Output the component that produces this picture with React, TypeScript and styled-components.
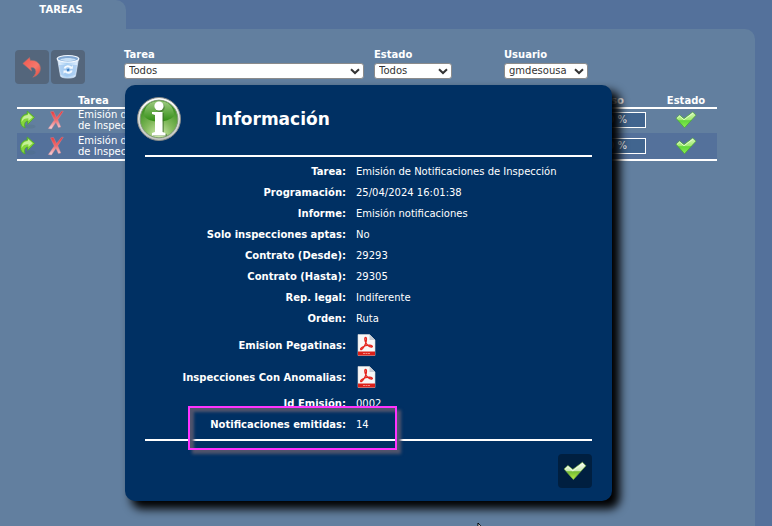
import React from "react";
import styled, { createGlobalStyle } from "styled-components";

const GlobalStyle = createGlobalStyle`
  * { box-sizing: border-box; }
  html, body, #root { height: 100%; }
  body {
    margin: 0;
    overflow: hidden;
    background: #54719b;
    color: #fff;
    font: 10px/11px Verdana, "DejaVu Sans", sans-serif;
  }
  button { border: 0; padding: 0; background: none; cursor: pointer; }
  svg { display: block; }
`;

const Page = styled.div`
  position: relative;
  min-height: 100%;
  display: flex;
  flex-direction: column;
  padding-right: 17px;
  overflow: hidden;
`;

const Tab = styled.a`
  width: 126px;
  height: 29px;
  padding: 4px 4px 0 0;
  border-radius: 0 10px 0 0;
  background: #627f9f;
  color: #fff;
  font-weight: bold;
  text-align: center;
  text-decoration: none;
`;

const Panel = styled.main`
  flex: 1;
  padding: 20px 38px 0 15px;
  border-radius: 0 10px 0 0;
  background: #627f9f;
`;

const Toolbar = styled.div`
  display: flex;
  gap: 2px;
  height: 46px;
`;

const ToolButton = styled.button<{ $dark?: boolean }>`
  display: grid;
  place-items: center;
  width: 34px;
  height: 34px;
  margin-top: ${(p) => (p.$dark ? 0 : 1)}px;
  border-radius: 4px;
  background: ${(p) => (p.$dark ? "#001f40" : "#54667c")};
`;

const Filters = styled.div`
  display: flex;
  margin-left: 37px;
`;

const Field = styled.label<{ $width: number }>`
  display: flex;
  flex-direction: column;
  gap: 3px;
  width: ${(p) => p.$width}px;
  font-weight: bold;
`;

const SelectBox = styled.span<{ $width: number }>`
  display: grid;
  align-items: center;
  width: ${(p) => p.$width}px;
  > * { grid-area: 1 / 1; }
  > svg { justify-self: end; margin-right: 4px; pointer-events: none; }
`;

const Select = styled.select`
  appearance: none;
  width: 100%;
  height: 16px;
  padding: 0 4px;
  border: 1px solid #8b8b8b;
  border-radius: 3px;
  background: #fff;
  color: #333;
  font: 10px/14px Verdana, "DejaVu Sans", sans-serif;
`;

const TaskTableFrame = styled.div`
  padding-left: 2px;
`;

const TaskTable = styled.table`
  width: 100%;
  table-layout: fixed;
  border-collapse: separate;
  border-spacing: 0;
  border-bottom: 2px solid #fff;
  th { height: 12px; padding: 0 0 1px; text-align: left; }
  th:last-child { text-align: center; }
  td { height: 26px; padding: 0; }
  tbody tr:first-child td { background: linear-gradient(#fff 2px, transparent 2px); }
  td:last-child svg { margin: 0 auto; }
`;

const Row = styled.tr<{ $alternate?: boolean }>`
  background: ${(p) => (p.$alternate ? "#54719b" : "transparent")};
`;

const IconButton = styled.button`
  display: block;
  margin-left: 2px;
`;

const Progress = styled.div`
  width: 70px;
  height: 16px;
  margin-left: 3px;
  border: 1px solid #fff;
  background: #41658f;
  line-height: 13px;
  text-align: center;
`;

const Dialog = styled.section`
  position: absolute;
  top: 85px;
  left: 125px;
  width: 487px;
  padding: 12px 20px 13px;
  border-radius: 10px;
  background: #003063;
  box-shadow: 7px 7px 10px 1px #000;
`;

const DialogHeader = styled.header`
  display: flex;
  align-items: center;
  gap: 32px;
  height: 58px;
  margin-left: -9px;
  padding-bottom: 14px;
  h1 { margin: 0; padding-left: 1px; font-size: 17px; line-height: 20px; }
`;

const Details = styled.dl`
  margin: 0;
  padding: 4px 0;
  border-top: 2px solid #fff;
  border-bottom: 2px solid #fff;
`;

const Detail = styled.div<{ $tall?: boolean }>`
  display: grid;
  grid-template-columns: 201px 1fr;
  column-gap: 10px;
  align-items: center;
  height: ${(p) => (p.$tall ? 32 : 21)}px;
  dt { font-weight: bold; text-align: right; white-space: nowrap; }
  dd { margin: 0; }
`;

const DialogFooter = styled.footer`
  display: flex;
  justify-content: flex-end;
  padding-top: 13px;
`;

const Highlight = styled.div`
  position: absolute;
  top: 321px;
  left: 63px;
  width: 209px;
  height: 44px;
  border: 2px solid #ff33ff;
  box-shadow: 4px 4px 3px #50546c, inset 4px 4px 3px #50546c;
  pointer-events: none;
`;

const Pointer = styled.svg`
  position: absolute;
  top: 522px;
  left: 477px;
`;

const Chevron = () => (
  <svg width="10" height="7" viewBox="0 0 10 7" aria-hidden="true">
    <path d="M1 1.200 5 5l4-3.800" fill="none" stroke="#333" strokeWidth="2" />
  </svg>
);

const UndoIcon = () => (
  <svg width="24" height="24" viewBox="0 0 24 24" aria-hidden="true">
    <defs>
      <linearGradient id="undo" x1="0" y1="0" x2="1" y2="1">
        <stop offset="0" stopColor="#f4564e" />
        <stop offset=".6" stopColor="#f5786c" />
        <stop offset="1" stopColor="#e0463c" />
      </linearGradient>
    </defs>
    <path d="M2.800 8.500 9.500 2.500l.8 3C16 4.800 20.200 8.200 20.400 13c.2 4.200-2.500 7.700-7.600 9.200 2.700-2.500 3.700-5.300 2.600-7.500-1-2-2.400-2.500-4.600-1.900l.8 3.200z" fill="url(#undo)" stroke="#a8726f" strokeWidth=".6" />
  </svg>
);

const BinIcon = () => (
  <svg width="24" height="26" viewBox="0 0 24 26" aria-hidden="true">
    <defs>
      <linearGradient id="bin" x1="0" x2="1">
        <stop offset="0" stopColor="#e9f4ff" />
        <stop offset=".45" stopColor="#a5cdf2" />
        <stop offset="1" stopColor="#e3efff" />
      </linearGradient>
    </defs>
    <path d="M1.500 4.500 4.500 22c.5 2.800 14.500 2.800 15 0l3-17.500z" fill="url(#bin)" stroke="#d8e8fa" strokeWidth=".7" />
    <path d="M3 11h18l-1.700 9.500c-3 2-11.600 2-14.600 0z" fill="#9cc4ee" opacity=".65" />
    <ellipse cx="12" cy="4.800" rx="10.800" ry="3.300" fill="#7fa6d2" stroke="#f2f8ff" strokeWidth="1.200" />
    <path d="M4 5.500c4-2 12-2 16 0-4 2-12 2-16 0z" fill="#c4def6" />
    <path d="M8.500 14.500c.8-2.600 4.800-3 6.500-.8M15.800 16.500c-.8 2.600-4.600 3-6.500.8" fill="none" stroke="#f5faff" strokeWidth="2" />
    <path d="M13.500 14.800h3.300v-3.500zM11 16.500H7.500v3.300z" fill="#f5faff" />
    <path d="m10.500 15.800 2-1.400 1.200 1.700-2 1.300z" fill="#397dc3" />
  </svg>
);

const RedoIcon = () => (
  <svg width="18" height="20" viewBox="0 0 18 20" aria-hidden="true">
    <ellipse cx="11" cy="16.500" rx="5.500" ry="2" fill="#486b72" opacity=".2" />
    <path d="M8.200 1v3C3.800 4.600 1.500 7.600 1.500 11.400c0 3.200 1.600 5.400 4.700 6.600-1.300-3-.6-6.600 2.500-7v3.400L15.500 7.300z" fill="#85d63c" stroke="#4ba82a" strokeWidth=".8" />
    <path d="M9 3v2C4.800 5.400 2.700 8 2.700 12 4 9 6 8.200 9.400 8.200v2.500L13.700 7.200z" fill="#c5f096" />
  </svg>
);

const DeleteIcon = () => (
  <svg width="18" height="20" viewBox="0 0 18 20" aria-hidden="true">
    <defs>
      <linearGradient id="del" x1="0" y1="0" x2="0" y2="1">
        <stop offset="0" stopColor="#e9393c" />
        <stop offset=".5" stopColor="#ef6e70" />
        <stop offset="1" stopColor="#f5d4dc" />
      </linearGradient>
    </defs>
    <path d="m3.500 1.800 3-.4 3 6L14.500 1.200h1.800L10.800 9.800l3 7.200-2.400.5-2.500-5.300L4.500 19l-3.200-.5 6-8.500z" fill="url(#del)" stroke="#d58d98" strokeWidth=".4" />
  </svg>
);

const CheckIcon = ({ large = false }: { large?: boolean }) => (
  <svg width={large ? 24 : 22} height={large ? 20 : 18} viewBox="0 0 22 18" aria-hidden="true">
    <defs>
      <linearGradient id={large ? "okLarge" : "ok"} x1="0" y1="0" x2="0" y2="1">
        <stop offset="0" stopColor={large ? "#ffffff" : "#d9f7bd"} />
        <stop offset=".48" stopColor={large ? "#c9e8b4" : "#a0eb70"} />
        <stop offset=".55" stopColor={large ? "#75bd36" : "#62d83d"} />
        <stop offset="1" stopColor={large ? "#b9ed43" : "#8aed50"} />
      </linearGradient>
    </defs>
    <path
      d="M1 7.200 4.500 4 9 7.600 17.800 1l3.200 3.200L9.500 16.800z"
      fill={large ? "url(#okLarge)" : "url(#ok)"}
      stroke={large ? "#78af45" : "#48a62f"}
      strokeWidth=".7"
      strokeLinejoin="round"
    />
    <path d="M2.200 7.200 4.600 5 9 8.800l8.800-6.600" fill="none" stroke="#f2ffe2" opacity=".75" />
  </svg>
);

const InfoIcon = () => (
  <svg width="46" height="46" viewBox="0 0 46 46" aria-hidden="true">
    <defs>
      <linearGradient id="rim" x1="0" y1="0" x2="0" y2="1">
        <stop offset="0" stopColor="#fff" />
        <stop offset="1" stopColor="#bfc2bf" />
      </linearGradient>
      <radialGradient id="globe" cx=".5" cy=".92" r=".85">
        <stop offset="0" stopColor="#d3edb0" />
        <stop offset=".45" stopColor="#82b95b" />
        <stop offset="1" stopColor="#338c1b" />
      </radialGradient>
      <linearGradient id="gloss" x1="0" y1="0" x2="0" y2="1">
        <stop offset="0" stopColor="#9dca80" />
        <stop offset="1" stopColor="#2f8d12" />
      </linearGradient>
    </defs>
    <circle cx="23" cy="23" r="21.500" fill="url(#rim)" stroke="#868a88" />
    <circle cx="23" cy="23" r="18.800" fill="url(#globe)" stroke="#7e9b70" />
    <path d="M8 20C8 10 14 5 23 5s15 5 15 15c-6 7-24 8-30 0z" fill="url(#gloss)" />
    <g fill="#3b662c" opacity=".55" transform="translate(1 1)">
      <circle cx="23" cy="10.500" r="4.700" />
      <path d="M16 16h11v20l3 1v2H16v-2l4-1V19l-4-1z" />
    </g>
    <circle cx="23" cy="10" r="4.600" fill="#fff" />
    <path d="M16 16h10.500v20l3 1v2.500H16V37l3-1V19l-3-1z" fill="#fff" />
  </svg>
);

const PdfIcon = () => (
  <svg width="22" height="22" viewBox="0 0 22 22" aria-hidden="true">
    <path d="M2 .5h11.500L19 6v15.500H2z" fill="#f7f7f7" stroke="#d8d8d8" strokeWidth=".6" />
    <path d="M13.500.5V6H19z" fill="#c9ced6" />
    <path d="M2 17.500h17v4H2z" fill="#dc2019" />
    <path d="M7 19.500h7" stroke="#f08a84" strokeWidth="1.200" strokeDasharray="2 .5" />
    <path d="M9.300 3.500c1.600-.8 1.500 3.500 0 6.800C7.800 13.500 5.600 16.200 4.700 15.400c-1-1.200 3.300-3.700 8.100-4.200 3.200-.3 4.600 1.500 2.900 1.800-2.300.3-5.600-2.700-6.400-5.500-.6-2-.5-3.700 0-4z" fill="none" stroke="#e5261f" strokeWidth="1.300" />
  </svg>
);

const filters = [
  { name: "Tarea", value: "Todos", width: 240, cell: 250 },
  { name: "Estado", value: "Todos", width: 78, cell: 130 },
  { name: "Usuario", value: "gmdesousa", width: 84, cell: 84 },
];

const details: { label: string; value?: string }[] = [
  { label: "Tarea:", value: "Emisión de Notificaciones de Inspección" },
  { label: "Programación:", value: "25/04/2024 16:01:38" },
  { label: "Informe:", value: "Emisión notificaciones" },
  { label: "Solo inspecciones aptas:", value: "No" },
  { label: "Contrato (Desde):", value: "29293" },
  { label: "Contrato (Hasta):", value: "29305" },
  { label: "Rep. legal:", value: "Indiferente" },
  { label: "Orden:", value: "Ruta" },
  { label: "Emision Pegatinas:" },
  { label: "Inspecciones Con Anomalias:" },
  { label: "Id Emisión:", value: "0002" },
  { label: "Notificaciones emitidas:", value: "14" },
];

const PdfLink = styled.a`
  display: block;
  width: 22px;
`;

export default function App() {
  return (
    <Page>
      <GlobalStyle />
      <Tab href="#tareas">TAREAS</Tab>
      <Panel id="tareas">
        <Toolbar>
          <ToolButton aria-label="Volver"><UndoIcon /></ToolButton>
          <ToolButton aria-label="Papelera"><BinIcon /></ToolButton>
          <Filters>
            {filters.map((f) => (
              <Field key={f.name} $width={f.cell}>
                {f.name}
                <SelectBox $width={f.width}>
                  <Select defaultValue={f.value}><option>{f.value}</option></Select>
                  <Chevron />
                </SelectBox>
              </Field>
            ))}
          </Filters>
        </Toolbar>
        <TaskTableFrame>
          <TaskTable>
            <colgroup>
              <col width="28" /><col width="33" /><col /><col width="82" /><col width="62" />
            </colgroup>
            <thead>
              <tr>
                <th aria-label="Repetir" /><th aria-label="Eliminar" />
                <th>Tarea</th><th>Progreso</th><th>Estado</th>
              </tr>
            </thead>
            <tbody>
              {[false, true].map((alternate) => (
                <Row key={String(alternate)} $alternate={alternate}>
                  <td><IconButton aria-label="Repetir"><RedoIcon /></IconButton></td>
                  <td><IconButton aria-label="Eliminar"><DeleteIcon /></IconButton></td>
                  <td>Emisión de Notificaciones<br />de Inspección</td>
                  <td><Progress>100 %</Progress></td>
                  <td><CheckIcon /></td>
                </Row>
              ))}
            </tbody>
          </TaskTable>
        </TaskTableFrame>
      </Panel>
      <Dialog role="dialog" aria-labelledby="dialog-title">
        <DialogHeader>
          <InfoIcon />
          <h1 id="dialog-title">Información</h1>
        </DialogHeader>
        <Details>
          {details.map((d) => (
            <Detail key={d.label} $tall={!d.value}>
              <dt>{d.label}</dt>
              <dd>{d.value ?? <PdfLink href="#pdf" aria-label={d.label}><PdfIcon /></PdfLink>}</dd>
            </Detail>
          ))}
        </Details>
        <DialogFooter>
          <ToolButton $dark aria-label="Aceptar"><CheckIcon large /></ToolButton>
        </DialogFooter>
        <Highlight />
      </Dialog>
      <Pointer width="12" height="18" viewBox="0 0 12 18" aria-hidden="true">
        <path d="M1 1v13l3-3 2 5 2-1-2-4h4z" fill="#fff" stroke="#000" />
      </Pointer>
    </Page>
  );
}
